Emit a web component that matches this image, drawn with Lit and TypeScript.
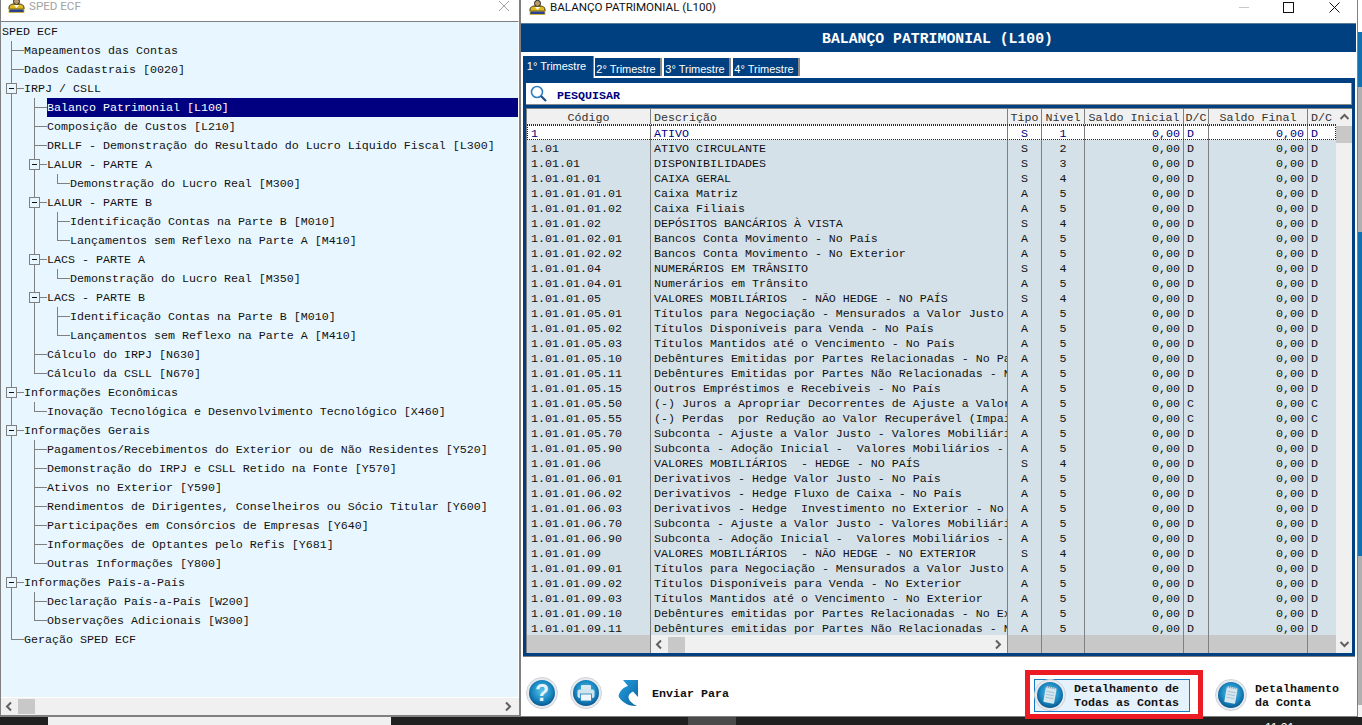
import { LitElement, html, css, svg } from "lit";
import { customElement } from "lit/decorators.js";

type Node = { t: string; sel?: boolean; c?: Node[] };
const tree: Node[] = [
  { t: "Mapeamentos das Contas" },
  { t: "Dados Cadastrais [0020]" },
  { t: "IRPJ / CSLL", c: [
    { t: "Balanço Patrimonial [L100]", sel: true },
    { t: "Composição de Custos [L210]" },
    { t: "DRLLF - Demonstração do Resultado do Lucro Líquido Fiscal [L300]" },
    { t: "LALUR - PARTE A", c: [{ t: "Demonstração do Lucro Real [M300]" }] },
    { t: "LALUR - PARTE B", c: [
      { t: "Identificação Contas na Parte B [M010]" },
      { t: "Lançamentos sem Reflexo na Parte A [M410]" } ] },
    { t: "LACS - PARTE A", c: [{ t: "Demonstração do Lucro Real [M350]" }] },
    { t: "LACS - PARTE B", c: [
      { t: "Identificação Contas na Parte B [M010]" },
      { t: "Lançamentos sem Reflexo na Parte A [M410]" } ] },
    { t: "Cálculo do IRPJ [N630]" },
    { t: "Cálculo da CSLL [N670]" } ] },
  { t: "Informações Econômicas", c: [
    { t: "Inovação Tecnológica e Desenvolvimento Tecnológico [X460]" } ] },
  { t: "Informações Gerais", c: [
    { t: "Pagamentos/Recebimentos do Exterior ou de Não Residentes [Y520]" },
    { t: "Demonstração do IRPJ e CSLL Retido na Fonte [Y570]" },
    { t: "Ativos no Exterior [Y590]" },
    { t: "Rendimentos de Dirigentes, Conselheiros ou Sócio Titular [Y600]" },
    { t: "Participações em Consórcios de Empresas [Y640]" },
    { t: "Informações de Optantes pelo Refis [Y681]" },
    { t: "Outras Informações [Y800]" } ] },
  { t: "Informações País-a-País", c: [
    { t: "Declaração País-a-País [W200]" },
    { t: "Observações Adicionais [W300]" } ] },
  { t: "Geração SPED ECF" },
];

type Flat = { t: string; sel: boolean; guides: boolean[]; last: boolean; box: boolean };
function flatten(nodes: Node[], guides: boolean[] = []): Flat[] {
  const out: Flat[] = [];
  nodes.forEach((n, i) => {
    const last = i === nodes.length - 1;
    out.push({ t: n.t, sel: !!n.sel, guides, last, box: !!n.c });
    if (n.c) out.push(...flatten(n.c, [...guides, !last]));
  });
  return out;
}

const P = "1.01.01.";
const rows: [string, string, string, number, string?][] = [
  ["1", "ATIVO", "S", 1],
  ["1.01", "ATIVO CIRCULANTE", "S", 2],
  ["1.01.01", "DISPONIBILIDADES", "S", 3],
  [P + "01", "CAIXA GERAL", "S", 4],
  [P + "01.01", "Caixa Matriz", "A", 5],
  [P + "01.02", "Caixa Filiais", "A", 5],
  [P + "02", "DEPÓSITOS BANCÁRIOS À VISTA", "S", 4],
  [P + "02.01", "Bancos Conta Movimento - No País", "A", 5],
  [P + "02.02", "Bancos Conta Movimento - No Exterior", "A", 5],
  [P + "04", "NUMERÁRIOS EM TRÂNSITO", "S", 4],
  [P + "04.01", "Numerários em Trânsito", "A", 5],
  [P + "05", "VALORES MOBILIÁRIOS  - NÃO HEDGE - NO PAÍS", "S", 4],
  [P + "05.01", "Títulos para Negociação - Mensurados a Valor Justo - No País", "A", 5],
  [P + "05.02", "Títulos Disponíveis para Venda - No País", "A", 5],
  [P + "05.03", "Títulos Mantidos até o Vencimento - No País", "A", 5],
  [P + "05.10", "Debêntures Emitidas por Partes Relacionadas - No País", "A", 5],
  [P + "05.11", "Debêntures Emitidas por Partes Não Relacionadas - No País", "A", 5],
  [P + "05.15", "Outros Empréstimos e Recebíveis - No País", "A", 5],
  [P + "05.50", "(-) Juros a Apropriar Decorrentes de Ajuste a Valor Presente", "A", 5, "C"],
  [P + "05.55", "(-) Perdas  por Redução ao Valor Recuperável (Impairment)", "A", 5, "C"],
  [P + "05.70", "Subconta - Ajuste a Valor Justo - Valores Mobiliários", "A", 5],
  [P + "05.90", "Subconta - Adoção Inicial -  Valores Mobiliários - No País", "A", 5],
  [P + "06", "VALORES MOBILIÁRIOS  - HEDGE - NO PAÍS", "S", 4],
  [P + "06.01", "Derivativos - Hedge Valor Justo - No País", "A", 5],
  [P + "06.02", "Derivativos - Hedge Fluxo de Caixa - No País", "A", 5],
  [P + "06.03", "Derivativos - Hedge  Investimento no Exterior - No País", "A", 5],
  [P + "06.70", "Subconta - Ajuste a Valor Justo - Valores Mobiliários", "A", 5],
  [P + "06.90", "Subconta - Adoção Inicial -  Valores Mobiliários - No País", "A", 5],
  [P + "09", "VALORES MOBILIÁRIOS  - NÃO HEDGE - NO EXTERIOR", "S", 4],
  [P + "09.01", "Títulos para Negociação - Mensurados a Valor Justo - No Exterior", "A", 5],
  [P + "09.02", "Títulos Disponíveis para Venda - No Exterior", "A", 5],
  [P + "09.03", "Títulos Mantidos até o Vencimento - No Exterior", "A", 5],
  [P + "09.10", "Debêntures emitidas por Partes Relacionadas - No Exterior", "A", 5],
  [P + "09.11", "Debêntures emitidas por Partes Não Relacionadas - No Exterior", "A", 5],
];

const chevron = (d: "u" | "d" | "l" | "r") => {
  const pts = { u: "1.5,7 5.5,3 9.5,7", d: "1.5,3 5.5,7 9.5,3", l: "7,1.5 3,5.5 7,9.5", r: "3,1.5 7,5.5 3,9.5" }[d];
  return html`<svg class="chev" width="11" height="11" viewBox="0 0 11 11"><polyline points=${pts} fill="none" stroke="#606060" stroke-width="2"/></svg>`;
};

const logo = html`<svg class="logo" width="17" height="15" viewBox="0 0 17 15">
  <ellipse cx="8.5" cy="3.5" rx="3" ry="3.2" fill="#b89a70" stroke="#2a2418" stroke-width="1"/>
  <path d="M1 10 C1 6 5 5.5 8.5 6.5 C12 5.5 16 6 16 10 L16 11 L1 11 Z" fill="#e0b820" stroke="#3a3010" stroke-width="1"/>
  <path d="M6 7 L8.5 10 L11 7 Z" fill="#fff"/>
  <rect x="1" y="11" width="15" height="3.5" fill="#2a3f90" stroke="#d8b820" stroke-width=".8"/>
</svg>`;

const round = (inner: unknown, id: string) => html`<svg class="round" width="32" height="32" viewBox="0 0 32 32">
  <defs>
    <radialGradient id=${id} cx=".5" cy=".42" r=".6">
      <stop offset="0" stop-color="#5cc3ea"/><stop offset=".6" stop-color="#1b8bc4"/><stop offset="1" stop-color="#07548c"/>
    </radialGradient>
  </defs>
  <circle cx="16" cy="16" r="15.5" fill="#e8eaee" stroke="#d0d3d9"/>
  <circle cx="16" cy="16" r="13" fill="url(#${id})"/>
  ${inner}
</svg>`;

const helpInner = svg`<text x="16" y="24" text-anchor="middle" font-family="Liberation Sans" font-weight="700" font-size="23" fill="#e8f2f8">?</text>`;
const printInner = svg`
  <rect x="11" y="8" width="10" height="5" rx="1" fill="#d8e8f0"/>
  <rect x="7.5" y="12.5" width="17" height="8.5" rx="2" fill="#d0e4ee"/>
  <rect x="10.5" y="17" width="11" height="7" fill="#f0f6fa" stroke="#1b7fb8" stroke-width=".8"/>`;
const noteInner = svg`
  <g transform="rotate(10 16 16)">
    <rect x="10.5" y="8" width="11" height="16" rx="1" fill="#d6e6ee"/>
    <path d="M10.5 8.5 h11" stroke="#6f9ab4" stroke-width="2" stroke-dasharray="1 1"/>
    <path d="M12 13 h8 M12 16 h8 M12 19 h8" stroke="#a8c4d2" stroke-width="1"/>
  </g>`;

@customElement("app-root")
export class AppRoot extends LitElement {
  static styles = css`
    :host {
      display: block; position: relative; width: 1362px; height: 725px; overflow: hidden;
      background: #fff; font-family: "Liberation Mono", monospace; font-size: 11.67px; color: #111;
    }
    .win { position: absolute; top: 0; box-sizing: border-box; display: flex; flex-direction: column; background: #fff; }
    .left { left: 0; width: 520px; height: 717px; border-left: 1px solid #808080; border-right: 1px solid #808080; border-bottom: 2px solid #808080; }
    .right { left: 520px; width: 838px; height: 717px; border-left: 1px solid #808080; border-right: 1px solid #808080; border-bottom: 1px solid #808080; }
    .title { display: flex; align-items: flex-start; font-family: Roboto, "Liberation Sans", sans-serif; font-size: 11.6px; white-space: nowrap; flex: none; }
    .left .title { height: 21px; color: #a2a2a2; padding-left: 7px; }
    .left .title .logo { margin-top: -2px; }
    .left .title span { margin-left: 4px; line-height: 12px; }
    .left .title .x { margin-left: auto; margin-right: 9px; margin-top: 0; }
    .right .title { height: 23px; color: #111; padding-left: 8px; }
    .right .title .logo { margin-top: 0; }
    .right .title span { margin-left: 4px; line-height: 15px; }
    .ctl { flex: none; }
    .c-min { margin-left: auto; margin-top: 7px; }
    .c-max { margin-left: 34px; margin-top: 2px; }
    .c-x { margin-left: 35px; margin-top: 2px; margin-right: 17px; }
    .tree { flex: 1; min-height: 0; background: #e8f7ff; border-top: 1px solid #808080; overflow: hidden; border-right: 1px solid #fff; }
    .row { display: flex; height: 19px; white-space: nowrap; }
    .root { padding-left: 1px; }
    .g { position: relative; flex: none; width: 23px; height: 19px; }
    .on::before { content: ""; position: absolute; left: 10px; top: 0; width: 1px; height: 19px; background: #808080; }
    .end::before { content: ""; position: absolute; left: 10px; top: 0; width: 1px; height: 9px; background: #808080; }
    .arm::after { content: ""; position: absolute; left: 10px; top: 9px; width: 13px; height: 1px; background: #808080; }
    .box { position: absolute; left: 5px; top: 4px; width: 11px; height: 11px; box-sizing: border-box; border: 1px solid #808080; background: #e8f7ff; z-index: 1; }
    .box::after { content: ""; position: absolute; left: 2px; top: 4px; width: 5px; height: 1px; background: #111; }
    .txt { flex: none; height: 19px; line-height: 21px; }
    .sel { flex: 1; background: #000080; color: #fff; }
    .hbar { flex: none; height: 17px; background: #f0f0f0; display: flex; align-items: center; padding: 0 5px 0 3px; border-top: 1px solid #fff; }
    .thumb-h { width: 17px; height: 15px; background: #c8c8c8; margin-left: 3px; }
    .hbar .chev:last-child { margin-left: auto; }
    .banner { flex: none; box-sizing: border-box; height: 29px; padding: 2px 2px 0 0; margin-right: 1px; background: #004080; border-top: 1px solid #5a7a9a; color: #fff; font-weight: 700; font-size: 14.8px; display: flex; align-items: center; justify-content: center; }
    .tabs { flex: none; display: flex; align-items: flex-start; margin-top: 4px; padding-left: 2px; height: 22px; }
    .tab { box-sizing: border-box; font-family: "Liberation Sans", Arial, sans-serif; font-size: 11px; color: #fff; background: #004080; border-right: 2px solid #8a8a8a; text-align: center; white-space: nowrap; padding-right: 3px; }
    .tab.act { width: 71px; height: 22px; line-height: 20px; margin-right: 1px; border-right-width: 1px; }
    .tab.off { width: 67px; height: 18px; line-height: 22px; margin-top: 2px; margin-right: 2px; }
    .panel { flex: none; box-sizing: content-box; width: 826px; margin-left: 2px; height: 570px; padding: 5px 3px 3px; background: #004080; display: flex; flex-direction: column; border-bottom: 1px solid #808080; }
    .search { flex: none; height: 21px; background: #fff; border-bottom: 1px solid #8a8a8a; border-right: 1px solid #8a8a8a; display: flex; align-items: center; padding-left: 4px; margin-bottom: 3px; color: #000080; font-weight: 700; }
    .search span { margin-left: 10px; margin-top: 4px; }
    .grid { flex: 1; min-height: 0; display: flex; background: #c8c8c8; border: 1px solid #808080; border-width: 1px 0 0 1px; }
    .cols { flex: none; width: 809px; display: flex; flex-direction: column; }
    .tr { flex: none; height: 15px; display: grid; grid-template-columns: 124px 357px 34px 43px 99px 25px 99px 28px; grid-template-rows: 100%; background: #d5e1e8; line-height: 19px; white-space: pre; }
    .tr > div { border-right: 1px solid #808080; overflow-x: clip; padding: 0 3px; box-sizing: border-box; }
    .tr > .code { padding-left: 4px; }
    .tr > .ctr { text-align: center; padding: 0; }
    .tr > .num { text-align: right; }
    .tr > .dc { padding: 0 0 0 3px; }
    .tr > div:last-child { border-right: 0; }
    .hd { height: 16px; background: #f0f0f0; border-bottom: 1px dotted #333; box-sizing: border-box; color: #303030; line-height: 19px; }
    .first { background: #fff; color: #000080; outline: 1px dotted #222; outline-offset: -1px; }
    .rest { flex: 1; background: #c8c8c8; height: auto; }
    .rest > .sc { padding: 1px 0 0; background: #f0f0f0; display: flex; align-items: center; }
    .rest .chev { margin-left: 3px; }
    .rest .chev:last-child { margin-left: auto; margin-right: 3px; }
    .thumb-s { width: 17px; height: 16px; background: #c8c8c8; margin-left: 3px; }
    .vbar { flex: 1; background: #f0f0f0; display: flex; flex-direction: column; align-items: center; padding-top: 3px; }
    .vbar .chev:last-child { margin-top: auto; margin-bottom: 3px; }
    .thumb-v { width: 16px; height: 17px; background: #c8c8c8; margin-top: 3px; }
    .foot { flex: 1; display: flex; align-items: center; padding: 12px 0 0 5px; color: #111; font-weight: 700; }
    .foot .round + .round { margin-left: 12px; }
    .arrow { margin-left: 15px; }
    .send { margin-left: 11px; margin-top: 2px; }
    .btn { position: relative; display: flex; align-items: center; gap: 8px; box-sizing: border-box; height: 33px; border: 1px solid transparent; margin-top: 5px; line-height: 14px; }
    .btn span { margin-top: 2px; }
    .btn .round { margin-left: -1px; }
    .b1 { margin-left: 305px; width: 156px; background: #e5f1fb; border-color: #1a78c2; }
    .b2 { margin-left: 25px; }
    .b1::after { content: ""; position: absolute; left: -10px; right: -14px; top: -10px; bottom: -8px; border: 5px solid #ed1c24; pointer-events: none; }
    .strip { position: absolute; left: 1358px; top: 0; width: 4px; height: 717px; display: flex; flex-direction: column; }
    .s-w { height: 32px; background: #fff; }
    .s-b1 { height: 55px; background: #1170b0; }
    .s-g1 { height: 145px; background: #b0b0b0; }
    .s-b2 { height: 324px; background: #1170b0; }
    .s-g2 { height: 149px; background: #b0b0b0; }
    .s-e { flex: 1; background: #f4f4f4; }
    .task { position: absolute; left: 0; top: 717px; width: 1362px; height: 8px; background: #202020; display: flex; overflow: hidden; }
    .srch { width: 343px; margin-left: 48px; background: #f0f0f0; }
    .tb { width: 48px; margin-left: 297px; background: #4a4a4a; }
    .clock { margin-left: 529px; padding-top: 4px; color: #fff; font-family: "Liberation Sans", sans-serif; font-size: 12px; line-height: 14px; }
  `;

  render() {
    const flat = flatten(tree);
    return html`
      <div class="strip"><div class="s-w"></div><div class="s-b1"></div><div class="s-g1"></div><div class="s-b2"></div><div class="s-g2"></div><div class="s-e"></div></div>
      <div class="task"><div class="srch"></div><div class="tb"></div><div class="clock">11:21</div></div>
      <section class="win left">
        <div class="title">${logo}<span>SPED ECF</span>
          <svg class="ctl x" width="12" height="12" viewBox="0 0 12 12"><path d="M1 1 L11 11 M11 1 L1 11" stroke="#a2a2a2" fill="none"/></svg>
        </div>
        <div class="tree">
          <div class="row root"><span class="txt">SPED ECF</span></div>
          ${flat.map((r) => html`<div class="row">
            ${r.guides.map((on) => html`<div class="g ${on ? "on" : ""}"></div>`)}
            <div class="g arm ${r.last ? "end" : "on"}">${r.box ? html`<div class="box"></div>` : ""}</div>
            <div class="txt ${r.sel ? "sel" : ""}">${r.t}</div>
          </div>`)}
        </div>
        <div class="hbar">${chevron("l")}<div class="thumb-h"></div>${chevron("r")}</div>
      </section>
      <section class="win right">
        <div class="title">${logo}<span>BALANÇO PATRIMONIAL (L100)</span>
          <svg class="ctl c-min" width="10" height="1" viewBox="0 0 10 1"><rect width="10" height="1" fill="#c8c8c8"/></svg>
          <svg class="ctl c-max" width="11" height="11" viewBox="0 0 11 11"><rect x=".5" y=".5" width="10" height="10" fill="none" stroke="#111"/></svg>
          <svg class="ctl c-x" width="11" height="11" viewBox="0 0 11 11"><path d="M.5 .5 L10.5 10.5 M10.5 .5 L.5 10.5" stroke="#111" fill="none"/></svg>
        </div>
        <div class="banner">BALANÇO PATRIMONIAL (L100)</div>
        <div class="tabs">
          <div class="tab act">1° Trimestre</div>
          <div class="tab off">2° Trimestre</div>
          <div class="tab off">3° Trimestre</div>
          <div class="tab off">4° Trimestre</div>
        </div>
        <div class="panel">
          <div class="search">
            <svg width="17" height="17" viewBox="0 0 17 17"><circle cx="7" cy="7" r="5.5" fill="none" stroke="#2f7fc4" stroke-width="1.6"/><path d="M11 11 L16 16" stroke="#1d4f86" stroke-width="2.2"/></svg>
            <span>PESQUISAR</span>
          </div>
          <div class="grid">
            <div class="cols">
              <div class="tr hd">
                <div class="ctr">Código</div><div>Descrição</div><div class="ctr">Tipo</div><div class="ctr">Nível</div>
                <div class="ctr">Saldo Inicial</div><div class="ctr">D/C</div><div class="ctr">Saldo Final</div><div class="dc">D/C</div>
              </div>
              ${rows.map((r, i) => html`<div class="tr ${i === 0 ? "first" : ""}">
                <div class="code">${r[0]}</div><div>${r[1]}</div><div class="ctr">${r[2]}</div><div class="ctr">${r[3]}</div>
                <div class="num">0,00</div><div class="dc">${r[4] ?? "D"}</div><div class="num">0,00</div><div class="dc">${r[4] ?? "D"}</div>
              </div>`)}
              <div class="tr rest">
                <div></div>
                <div class="sc">${chevron("l")}<div class="thumb-s"></div>${chevron("r")}</div>
                <div></div><div></div><div></div><div></div><div></div><div></div>
              </div>
            </div>
            <div class="vbar">${chevron("u")}<div class="thumb-v"></div>${chevron("d")}</div>
          </div>
        </div>
        <div class="foot">
          ${round(helpInner, "g1")}
          ${round(printInner, "g2")}
          <svg class="arrow" width="24" height="28" viewBox="0 0 24 28">
            <defs><linearGradient id="ga" x1="0" y1="0" x2="1" y2="1"><stop offset="0" stop-color="#27a0de"/><stop offset="1" stop-color="#0a64a4"/></linearGradient></defs>
            <path d="M6 1 H21 V18 L16 12.5 C11 15 10 19 14 23 C16 25 18 26 20 27 C12 28 3 22 1.5 17 C3 11 7 8 11 7 Z" fill="url(#ga)"/>
          </svg>
          <span class="send">Enviar Para</span>
          <div class="btn b1">${round(noteInner, "g3")}<span>Detalhamento de<br />Todas as Contas</span></div>
          <div class="btn b2">${round(noteInner, "g4")}<span>Detalhamento<br />da Conta</span></div>
        </div>
      </section>
    `;
  }
}
